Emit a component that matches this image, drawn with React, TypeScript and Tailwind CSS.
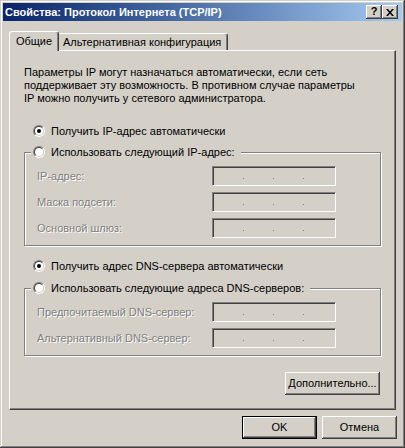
import React from "react";

const raised =
  "shadow-[inset_-1px_-1px_#404040,inset_1px_1px_#ffffff,inset_-2px_-2px_#808080,inset_2px_2px_#d4d0c8]";

function Radio({ checked }: { checked?: boolean }) {
  return (
    <span className="w-[12px] h-[12px] rounded-full border border-t-[#808080] border-l-[#808080] border-b-white border-r-white flex shrink-0">
      <span className="w-full h-full rounded-full border border-t-[#404040] border-l-[#404040] border-b-[#d4d0c8] border-r-[#d4d0c8] bg-white flex items-center justify-center">
        {checked && <span className="w-[4px] h-[4px] rounded-full bg-black" />}
      </span>
    </span>
  );
}

function IpBox() {
  return (
    <div className="w-[124px] h-[20px] bg-[#d4d0c8] border border-t-[#808080] border-l-[#808080] border-b-white border-r-white shadow-[inset_1px_1px_#404040,inset_-1px_-1px_#d4d0c8] flex items-start pt-[11px] pl-[30px] gap-[29px]">
      <span className="w-[1px] h-[1px] bg-[#808080]" />
      <span className="w-[1px] h-[1px] bg-[#808080]" />
      <span className="w-[1px] h-[1px] bg-[#808080]" />
    </div>
  );
}

function FieldRow({ label }: { label: string }) {
  return (
    <div className="flex items-center h-[20px]">
      <span className="w-[187px] pl-[12px] text-[#808080] [text-shadow:1px_1px_0_#ffffff] whitespace-nowrap">
        {label}
      </span>
      <IpBox />
    </div>
  );
}

function Group({ title, fields }: { title: string; fields: string[] }) {
  return (
    <fieldset className="w-[357px] border border-[#808080] shadow-[inset_1px_1px_#ffffff,1px_1px_#ffffff] px-0">
      <legend className="ml-[6px] pl-[2px] pr-[6px] bg-[#d4d0c8]">
        <span className="flex items-center gap-[6px] h-[14px] whitespace-nowrap">
          <Radio />
          {title}
        </span>
      </legend>
      <div className="flex flex-col gap-[6px] pt-[7px] pb-[7px]">
        {fields.map((f) => (
          <FieldRow key={f} label={f} />
        ))}
      </div>
    </fieldset>
  );
}

export default function App() {
  return (
    <div className="w-[405px] h-[448px] bg-[#d4d0c8] p-[3px] flex flex-col text-[11px] leading-[13px] text-black font-['Liberation_Sans',Arial,sans-serif] shadow-[inset_-1px_-1px_#404040,inset_1px_1px_#d4d0c8,inset_-2px_-2px_#808080,inset_2px_2px_#ffffff]">
      {/* Title bar */}
      <div className="h-[18px] flex items-center justify-between pl-[2px] pr-[4px] bg-gradient-to-r from-[#0a246a] to-[#a6caf0]">
        <span className="text-white font-bold whitespace-nowrap">
          Свойства: Протокол Интернета (TCP/IP)
        </span>
        <div className="flex">
          <button className={`w-[16px] h-[14px] bg-[#d4d0c8] ${raised} flex items-center justify-center font-bold text-[11px] leading-none pb-[1px]`}>
            ?
          </button>
          <button className={`w-[16px] h-[14px] bg-[#d4d0c8] ${raised} flex items-center justify-center`}>
            <svg width="8" height="7" viewBox="0 0 8 7">
              <path d="M0 0h2l2 2.5L6 0h2L5 3.5 8 7H6L4 4.5 2 7H0l3-3.5z" fill="#000" />
            </svg>
          </button>
        </div>
      </div>

      {/* Tabs */}
      <div className="px-[6px] pt-[10px]">
        <div className="flex items-end h-[19px]">
          <div className="relative z-10 -mb-px w-[50px] h-[20px] bg-[#d4d0c8] border-t border-l border-white border-r border-r-[#404040] rounded-t-[3px] shadow-[inset_-1px_0_#808080] flex justify-center pt-[3px]">
            Общие
          </div>
          <div className="w-[169px] h-[17px] bg-[#d4d0c8] border-t border-t-white border-r border-r-[#404040] rounded-tr-[3px] shadow-[inset_-1px_0_#808080] pl-[4px] pt-[2px] whitespace-nowrap">
            Альтернативная конфигурация
          </div>
        </div>

        {/* Panel */}
        <div className="w-[387px] h-[360px] border border-t-white border-l-white border-r-[#404040] border-b-[#404040] shadow-[inset_-1px_-1px_#808080] pl-[14px] pt-[15px] flex flex-col">
          <p className="whitespace-nowrap">
            Параметры IP могут назначаться автоматически, если сеть
            <br />
            поддерживает эту возможность. В противном случае параметры
            <br />
            IP можно получить у сетевого администратора.
          </p>

          <div className="mt-[19px] h-[14px] pl-[9px] flex items-center gap-[6px]">
            <Radio checked />
            Получить IP-адрес автоматически
          </div>

          <div className="mt-[7px]">
            <Group
              title="Использовать следующий IP-адрес:"
              fields={["IP-адрес:", "Маска подсети:", "Основной шлюз:"]}
            />
          </div>

          <div className="mt-[13px] h-[14px] pl-[9px] flex items-center gap-[6px]">
            <Radio checked />
            Получить адрес DNS-сервера автоматически
          </div>

          <div className="mt-[8px]">
            <Group
              title="Использовать следующие адреса DNS-серверов:"
              fields={["Предпочитаемый DNS-сервер:", "Альтернативный DNS-сервер:"]}
            />
          </div>

          <div className="w-[357px] flex justify-end mt-[16px] pr-[1px]">
            <button className={`w-[95px] h-[23px] bg-[#d4d0c8] ${raised} flex items-center justify-center`}>
              Дополнительно...
            </button>
          </div>
        </div>
      </div>

      {/* Bottom buttons */}
      <div className="flex justify-end gap-[5px] pr-[5px] mt-[6px]">
        <button className={`w-[75px] h-[23px] bg-[#d4d0c8] border border-black ${raised} flex items-center justify-center`}>
          OK
        </button>
        <button className={`w-[75px] h-[23px] bg-[#d4d0c8] ${raised} flex items-center justify-center`}>
          Отмена
        </button>
      </div>
    </div>
  );
}
